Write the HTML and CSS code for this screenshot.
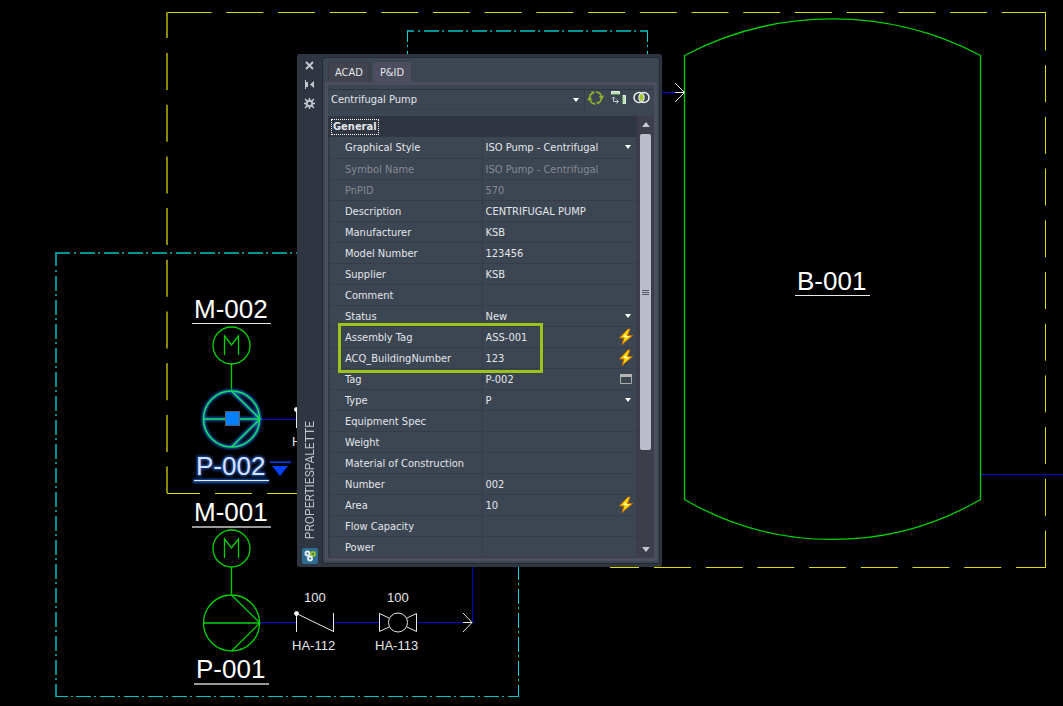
FILE: index.html
```html
<!DOCTYPE html>
<html lang="en">
<head>
<meta charset="utf-8">
<title>Properties palette</title>
<link rel="stylesheet" href="styles.css">
</head>
<body>
<main class="workspace">
<svg class="drawing" viewBox="0 0 1063 706" preserveAspectRatio="xMinYMin slice" role="img" aria-label="Piping diagram">
  <defs>
    <g id="motor"><circle cx="231.500" cy="345.500" r="18.500"/><path d="M224.500 355V336L231.500 345L238.500 336V355M231.500 364V391"/></g>
    <g id="pump"><circle cx="231.500" cy="419" r="28"/><path d="M203.500 419H260M231.500 391L260 419L231.500 447"/></g>
    <g id="check"><path d="M296.500 613V632M296.500 613.500L333.500 631.500M333.500 613V632"/><circle class="dot" cx="296.500" cy="613.500" r="2"/></g>
    <filter id="glow" x="-20%" y="-20%" width="140%" height="140%"><feGaussianBlur stdDeviation="1"/></filter>
  </defs>
  <g class="zone">
    <path d="M167 12.500H175M1038 12.500H1046M1045.500 12V20M610 567.500H639"/>
    <path class="dash" d="M174.500 12.500H1046"/>
    <path class="dash" d="M1045.500 13.500V567"/>
    <path class="dash" d="M654 567.500H1046"/>
    <path d="M167 493.500H200M215 493.500H252M267 493.500H300"/>
    <path class="dim" d="M167 12V38"/>
    <path class="dim dash" d="M167 53V493"/>
  </g>
  <g class="area">
    <path class="soft" d="M56 253H70M74 253H76M56 252V266M56 270V272M407 31H414M418 31H420"/>
    <path class="soft dashdot" d="M80 253H300"/>
    <path class="soft dashdot" d="M56 276V697"/>
    <path class="mid" d="M56 696.500H68M71 696.500H73"/>
    <path class="mid dashdot" d="M76 696.500H519"/>
    <path class="dashdot" d="M518.500 565V697"/>
    <path class="soft dashdot" d="M424 31H648"/>
    <path d="M407.500 31V42M407.500 45V47M407.500 51V60M647.500 31V42M647.500 45V47M647.500 51V60"/>
  </g>
  <g class="wire">
    <path d="M260 419.500H300M260 622.500H296M334 622.500H379M417 622.500H472M472.500 560V622M660 92.500H676M980 474.500H1063"/>
  </g>
  <g class="green">
    <path d="M684.500 55.500A318 318 0 0 1 980.500 55.500V499.500A294 294 0 0 1 684.500 499.500Z"/>
    <use href="#motor"/>
    <use href="#motor" y="203"/>
    <use href="#pump" y="204"/>
  </g>
  <g class="halo" filter="url(#glow)"><use href="#pump"/><path d="M193 481H269"/></g>
  <g class="picked"><use href="#pump"/></g>
  <rect class="grip" x="225.500" y="411.500" width="14" height="14"/>
  <path class="flip" d="M270 461.500H291V463H270ZM272 466H288L280 476Z"/>
  <g class="white">
    <use href="#check"/>
    <use href="#check" y="-204"/>
    <circle cx="398" cy="622.500" r="9.500"/>
    <path d="M389 618L379.500 613.500V631.500L389 627M407 618L416.500 613.500V631.500L407 627"/>
    <path d="M463 613L472 622.500L463 632M463 622.500H472M675 83L684.500 92.500L675 102M675 92.500H684"/>
    <path d="M192 323.500H271M194 480.500H269M795 295.500H870"/>
    <path class="rule" d="M192 527H271M194 684H269"/>
  </g>
  <g class="tag">
    <text x="194" y="318">M-002</text>
    <text x="194" y="521">M-001</text>
    <text x="196" y="678">P-001</text>
    <text x="797" y="290">B-001</text>
    <text class="tag-halo" x="196" y="475" filter="url(#glow)">P-002</text>
    <text class="tag-picked" x="196" y="475">P-002</text>
  </g>
  <g class="note">
    <text x="304" y="602">100</text>
    <text x="387" y="602">100</text>
    <text x="292" y="650">HA-112</text>
    <text x="375" y="650">HA-113</text>
    <text x="292" y="446">HA-114</text>
  </g>
</svg>

<section class="palette" aria-label="Properties palette">
  <div class="strip">
    <button class="strip-btn" aria-label="Close"><svg width="11" height="11" viewBox="0 0 11 11"><path class="bold" d="M2 2L9 9M9 2L2 9"/></svg></button>
    <button class="strip-btn" aria-label="Auto-hide"><svg width="11" height="11" viewBox="0 0 11 11"><path d="M1.500 1V10"/><path class="fill" d="M2 3H4V8H2ZM10 2V9L6 5.500Z"/></svg></button>
    <button class="strip-btn" aria-label="Settings"><svg width="11" height="11" viewBox="0 0 11 11"><circle class="bold" cx="5.500" cy="5.500" r="2.800"/><path class="teeth" d="M5.500 0V2M5.500 9V11M0 5.500H2M9 5.500H11M1 1L3 3M8 8L10 10M10 1L8 3M3 8L1 10"/></svg></button>
    <span class="strip-name">PROPERTIESPALETTE</span>
    <svg class="strip-logo" width="16" height="16" viewBox="0 0 16 16"><rect width="16" height="16" rx="2" fill="#2d6c93"/><g fill="none" stroke-width="2"><circle cx="5.500" cy="5.500" r="2" stroke="#e4eef4"/><circle cx="11" cy="6" r="2" stroke="#93c01f"/><circle cx="8" cy="10.500" r="2" stroke="#e4eef4"/></g></svg>
  </div>
  <div class="panel">
    <nav class="tabs"><button class="tab">ACAD</button><button class="tab active">P&amp;ID</button></nav>
    <div class="page">
      <div class="toolbar">
        <div class="pick"><select aria-label="Object type"><option>Centrifugal Pump</option></select></div>
        <div class="tools">
        <button class="tool" aria-label="Refresh"><svg width="17" height="16" viewBox="0 0 17 16" fill="none" stroke="#93b42a" stroke-width="1.500"><path d="M2.500 8A6 6 0 0 1 6 2.800M9 2A6 6 0 0 1 14.500 7M14.500 8A6 6 0 0 1 11.500 13M8.500 14A6 6 0 0 1 3 10"/><path fill="#93b42a" stroke="none" d="M0 10.500L2.500 6.500L5.500 9.500ZM11.500 6.500L17 5.500L15 9.500ZM4 1.500H8L6 4.500ZM9 12L13 11.500L11 14.500Z"/></svg></button>
        <button class="tool" aria-label="Align"><svg width="17" height="16" viewBox="0 0 17 16"><path fill="#b9dcb5" stroke="#e4f3e0" d="M1.500 1.500H9.500V4.500H1.500ZM12.500 5.500H15.500V13.500H12.500Z"/><path fill="#5c9367" d="M1 4H10V5H1ZM12 5H13V14H12Z"/><path fill="none" stroke="#c9ccd4" d="M3.500 7V11.500H8M2 8.500L3.500 7L5 8.500M6.500 9.500L8.500 11.500L6.500 13.500"/></svg></button>
        <button class="tool" aria-label="Compare"><svg width="17" height="16" viewBox="0 0 17 16"><g fill="none" stroke="#eceef1" stroke-width="1.500"><circle cx="6" cy="7.500" r="5"/><circle cx="11" cy="7.500" r="5"/></g><ellipse cx="8.500" cy="7.500" rx="2" ry="3.500" fill="#a5ca2e"/></svg></button>
        </div>
      </div>
      <div class="body">
        <div class="list">
          <h2 class="group"><span>General</span></h2>
          <table class="grid">
            <tr><th><label for="f1">Graphical Style</label></th><td><div class="pick"><select id="f1"><option>ISO Pump - Centrifugal</option></select></div></td></tr>
            <tr class="off"><th><label for="f2">Symbol Name</label></th><td><input id="f2" value="ISO Pump - Centrifugal" readonly></td></tr>
            <tr class="off"><th><label for="f3">PnPID</label></th><td><input id="f3" value="570" readonly></td></tr>
            <tr><th><label for="f4">Description</label></th><td><input id="f4" value="CENTRIFUGAL PUMP"></td></tr>
            <tr><th><label for="f5">Manufacturer</label></th><td><input id="f5" value="KSB"></td></tr>
            <tr><th><label for="f6">Model Number</label></th><td><input id="f6" value="123456"></td></tr>
            <tr><th><label for="f7">Supplier</label></th><td><input id="f7" value="KSB"></td></tr>
            <tr><th><label for="f8">Comment</label></th><td><input id="f8"></td></tr>
            <tr><th><label for="f9">Status</label></th><td><div class="pick"><select id="f9"><option>New</option></select></div></td></tr>
            <tr><th><label for="f10">Assembly Tag</label></th><td><div class="cell"><input id="f10" value="ASS-001"><svg class="bolt" width="16" height="18" viewBox="0 0 16 18"><path d="M10 1L1.500 10H6L4 16.500L14.500 7.500H9.500L12 1Z"/><path class="shine" d="M8 6L5 9H9L8 11L11 8H8Z"/></svg></div></td></tr>
            <tr><th><label for="f11">ACQ_BuildingNumber</label></th><td><div class="cell"><input id="f11" value="123"><svg class="bolt" width="16" height="18" viewBox="0 0 16 18"><path d="M10 1L1.500 10H6L4 16.500L14.500 7.500H9.500L12 1Z"/><path class="shine" d="M8 6L5 9H9L8 11L11 8H8Z"/></svg></div></td></tr>
            <tr><th><label for="f12">Tag</label></th><td><div class="cell"><input id="f12" value="P-002"><svg width="16" height="12" viewBox="0 0 16 12"><path fill="none" stroke="#a9aaa9" d="M2.500 1.500H13.500V10.500H2.500Z"/><path fill="#b5b5b3" d="M2 1H14V4H2Z"/></svg></div></td></tr>
            <tr><th><label for="f13">Type</label></th><td><div class="pick"><select id="f13"><option>P</option></select></div></td></tr>
            <tr><th><label for="f14">Equipment Spec</label></th><td><input id="f14"></td></tr>
            <tr><th><label for="f15">Weight</label></th><td><input id="f15"></td></tr>
            <tr><th><label for="f16">Material of Construction</label></th><td><input id="f16"></td></tr>
            <tr><th><label for="f17">Number</label></th><td><input id="f17" value="002"></td></tr>
            <tr><th><label for="f18">Area</label></th><td><div class="cell"><input id="f18" value="10"><svg class="bolt" width="16" height="18" viewBox="0 0 16 18"><path d="M10 1L1.500 10H6L4 16.500L14.500 7.500H9.500L12 1Z"/><path class="shine" d="M8 6L5 9H9L8 11L11 8H8Z"/></svg></div></td></tr>
            <tr><th><label for="f19">Flow Capacity</label></th><td><input id="f19"></td></tr>
            <tr><th><label for="f20">Power</label></th><td><input id="f20"></td></tr>
          </table>
          <div class="highlight"></div>
        </div>
        <div class="scroll">
          <span class="arrow up"></span>
          <div class="track"><div class="thumb"><i></i><i></i><i></i></div></div>
          <span class="arrow down"></span>
        </div>
      </div>
    </div>
  </div>
</section>
</main>
</body>
</html>
```
FILE: styles.css
```css
* { box-sizing: border-box; }
body { margin: 0; background: #000; font: 11px/20px "DejaVu Sans Condensed", Roboto, sans-serif; color: #e3e6ea; }
button, input, select { font: inherit; color: inherit; background: none; border: 0; padding: 0; margin: 0; border-radius: 0; }
svg { display: block; flex: none; }

.workspace { position: relative; min-height: 100vh; overflow: hidden; }
.drawing { width: 100%; height: 100vh; fill: none; }
.zone { stroke: #dcdc00; }
.dash { stroke-dasharray: 37 14.700; }
.dim { stroke: #8a8a00; stroke-width: 2; }
.area { stroke: #00d8d8; }
.dashdot { stroke-dasharray: 15 3 2 4; }
.soft { stroke: #009494; stroke-width: 2; }
.mid { stroke: #00c0c0; }
.wire { stroke: #0000d8; }
.green { stroke: #00d200; stroke-width: 1.300; }
.halo { stroke: #1f55b4; stroke-width: 4; }
.picked { stroke: #10e05c; stroke-width: 1.500; }
.grip { fill: #007fff; stroke: #55606c; }
.flip { fill: #0040ff; }
.white { stroke: #e8e8e8; }
.rule { stroke: #999; stroke-width: 2; }
.dot { fill: #fff; }
.tag, .note { font-family: "Liberation Sans", Arial, sans-serif; fill: #fff; }
.tag { font-size: 26px; }
.note { font-size: 13px; fill: #e8e8e8; }
.tag-halo { stroke: #1d4494; stroke-width: 3; }
.tag-picked { fill: #d3e0ff; }

.palette { position: absolute; left: 297px; top: 54px; width: 365px; display: flex; padding: 3px 2px 3px 0; background: #2f3541; border-radius: 3px; }
.strip { width: 25px; display: flex; flex-direction: column; align-items: center; gap: 8px; padding-top: 3px; }
.strip-btn { height: 11px; }
.strip-btn svg { fill: none; stroke: #c3c6cc; }
.strip-btn .bold { stroke-width: 2; }
.strip-btn .teeth { stroke-width: 1.500; }
.strip-btn .fill { fill: #c3c6cc; stroke: none; }
.strip-name { margin-top: auto; writing-mode: vertical-rl; transform: rotate(180deg); font: 12px/16px Roboto, sans-serif; color: #c0c4ca; }

.panel { flex: 1; min-width: 0; background: #3c4552; border: 1px solid #232933; border-radius: 3px; padding: 4px 2px 2px; }
.tabs { display: flex; gap: 3px; padding-left: 3px; height: 20px; }
.tab { padding: 0 6px; line-height: 19px; background: #41434f; border: 1px solid #383a46; border-bottom: 0; border-radius: 3px 3px 0 0; }
.tab.active { background: #4c4d5e; border-color: #4c4d5e; }
.page { border: 3px solid #4c4d5e; border-radius: 2px; }
.toolbar { display: flex; gap: 2px; margin-top: 4px; padding: 0 4px 6px 0; border-top: 1px solid #2d3440; }
.toolbar > .pick { flex: 1; height: 20px; padding-left: 3px; border-right: 1px solid #353d49; border-bottom: 1px solid #383f4c; }
.tools { display: flex; gap: 6px; }
.tool { height: 16px; }
.pick { position: relative; min-width: 0; }
.pick select { appearance: none; display: block; width: 100%; height: 20px; outline: 0; }
.pick::after { content: ""; position: absolute; right: 5px; top: 8px; border: 3px solid transparent; border-top: 4px solid #fff; border-bottom: 0; pointer-events: none; }
.toolbar .pick select { height: 19px; }

.body { display: flex; }
.list { position: relative; flex: 1; min-width: 0; }
.group { margin: 0; height: 21px; padding: 3px 3px 2px; background: #2f3541; font: bold 11px/14px "DejaVu Sans Condensed", "Noto Sans", sans-serif; }
.group span { display: block; width: max-content; height: 16px; padding: 0 1px; border: 1px dotted #fff; }
.grid { width: 100%; border-collapse: collapse; table-layout: fixed; border-left: 2px solid #343944; }
.grid th, .grid td { height: 21px; padding: 0; border-bottom: 1px solid #383c48; }
.grid th { width: 153px; padding-left: 15px; text-align: left; font-weight: normal; border-right: 1px solid #383c48; white-space: nowrap; }
.grid td { padding-left: 3px; border-right: 1px solid #383c48; }
.grid label, .grid input, .grid select { display: block; height: 20px; padding-top: 1px; line-height: 19px; }
.grid label { padding-top: 2px; line-height: 18px; }
.grid input { width: 100%; min-width: 0; outline: 0; }
.off { color: #848a93; }
.cell { display: flex; align-items: center; padding-right: 2px; }
.bolt { fill: #ffd500; stroke: #c46a00; margin: 1px 0; }
.bolt .shine { fill: #fffbb0; stroke: none; }
.highlight { position: absolute; left: 10px; right: 94px; top: 207px; height: 50px; border: 3px solid #9bc31c; pointer-events: none; }

.scroll { width: 17px; display: flex; flex-direction: column; align-items: center; justify-content: space-between; padding: 6px 0; background: #3e3e4b; }
.arrow { border: 4px solid transparent; }
.up { border-top: 0; border-bottom: 5px solid #c5c6d2; }
.down { border-bottom: 0; border-top: 5px solid #c5c6d2; }
.track { flex: 1; width: 11px; margin: 7px 0; }
.thumb { height: 78%; background: #babccc; border-radius: 2px; display: flex; flex-direction: column; align-items: center; justify-content: center; gap: 1px; }
.thumb i { width: 7px; height: 1px; background: #555766; }
```
